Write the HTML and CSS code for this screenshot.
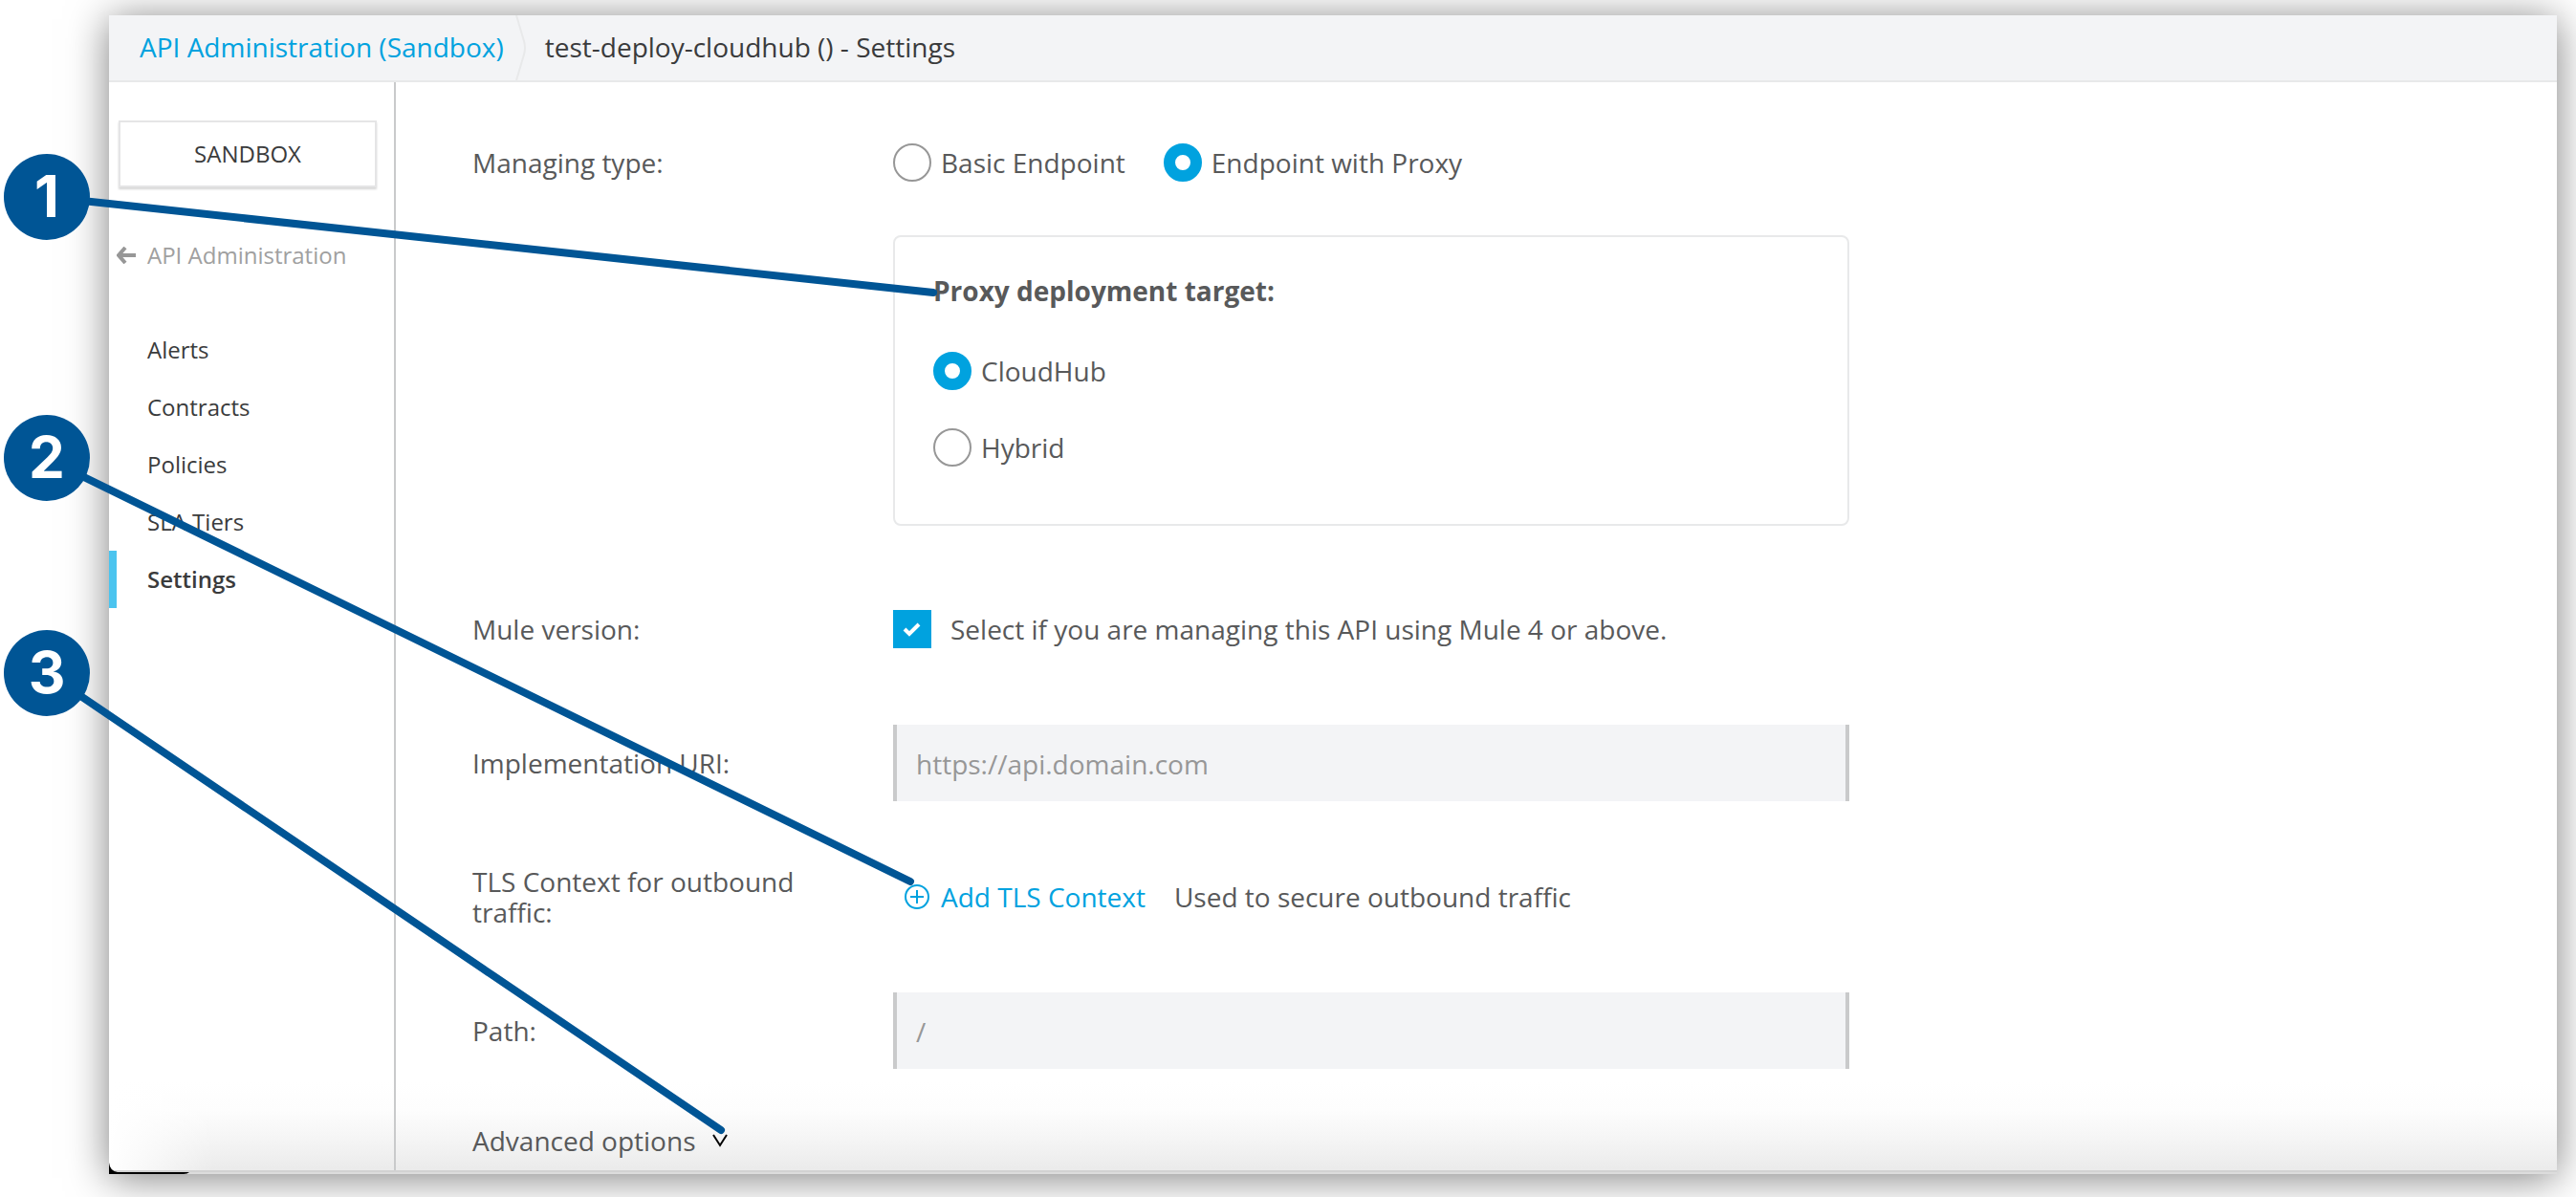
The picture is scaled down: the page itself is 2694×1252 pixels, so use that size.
FILE: index.html
```html
<!DOCTYPE html>
<html lang="en">
<head>
<meta charset="utf-8">
<title>test-deploy-cloudhub () - Settings</title>
<link rel="stylesheet" href="styles.css">
</head>
<body>
<div class="window">
  <header class="topbar">
    <a class="crumb-link" href="#">API Administration (Sandbox)</a>
    <svg class="crumb-sep" viewBox="0 0 12 68" preserveAspectRatio="none" aria-hidden="true"><path d="M1 0L9 27Q11 34 9 41L1 68"/></svg>
    <h1 class="crumb-current">test-deploy-cloudhub () - Settings</h1>
  </header>
  <div class="body">
    <aside class="sidebar">
      <button class="env-button" type="button">SANDBOX</button>
      <a class="back" href="#">
        <svg class="back-icon" viewBox="0 0 20 18" aria-hidden="true"><path d="M9 1L2 9L9 17M2 9H20"/></svg>
        API Administration
      </a>
      <nav class="nav">
        <a class="nav-item" href="#">Alerts</a>
        <a class="nav-item" href="#">Contracts</a>
        <a class="nav-item" href="#">Policies</a>
        <a class="nav-item" href="#">SLA Tiers</a>
        <a class="nav-item nav-item-active" href="#" aria-current="page">Settings</a>
      </nav>
    </aside>
    <main class="content">
      <form class="form">
        <div class="row" role="radiogroup" aria-labelledby="managing">
          <span class="row-label" id="managing">Managing type:</span>
          <div class="options">
            <label class="option"><input class="radio" type="radio" name="managing">Basic Endpoint</label>
            <label class="option"><input class="radio" type="radio" name="managing" checked>Endpoint with Proxy</label>
          </div>
        </div>
        <fieldset class="target" aria-labelledby="target">
          <span class="target-title" id="target">Proxy deployment target:</span>
          <label class="option"><input class="radio" type="radio" name="target" checked>CloudHub</label>
          <label class="option"><input class="radio" type="radio" name="target">Hybrid</label>
        </fieldset>
        <div class="row row-version">
          <span class="row-label">Mule version:</span>
          <label class="check-option">
            <span class="check-box">
              <input class="check" type="checkbox" checked>
              <svg class="check-mark" viewBox="0 0 20 16" aria-hidden="true"><path d="M2 8L7 13L17 3"/></svg>
            </span>
            Select if you are managing this API using Mule 4 or above.
          </label>
        </div>
        <div class="row row-uri">
          <label class="row-label" for="uri">Implementation URI:</label>
          <input class="field" id="uri" type="text" placeholder="https://api.domain.com">
        </div>
        <div class="row row-wide">
          <span class="row-label">TLS Context for outbound traffic:</span>
          <div class="tls">
            <button class="add" type="button">
              <svg class="add-icon" viewBox="0 0 26 26" aria-hidden="true"><circle cx="13" cy="13" r="12"/><path d="M13 6V20M6 13H20"/></svg>
              Add TLS Context
            </button>
            <span>Used to secure outbound traffic</span>
          </div>
        </div>
        <div class="row row-wide">
          <label class="row-label" for="path">Path:</label>
          <input class="field" id="path" type="text" placeholder="/">
        </div>
        <button class="advanced" type="button">
          Advanced options
          <svg class="advanced-icon" viewBox="0 0 16 14" aria-hidden="true"><path d="M1 1L8 12L15 1"/></svg>
        </button>
      </form>
    </main>
  </div>
  <svg class="corner" viewBox="0 0 84 12" aria-hidden="true"><path d="M0 0Q1 9 9 10H84Q82 12 78 12H0Z"/></svg>
</div>
<svg class="callouts">
  <g class="callout-lines">
    <path d="M49 206L976 306"/>
    <path d="M49 480L952 922"/>
    <path d="M49 704L754 1182"/>
  </g>
  <circle cx="49" cy="206" r="45"/>
  <circle cx="49" cy="479" r="45"/>
  <circle cx="49" cy="704" r="45"/>
  <g class="callout-numbers">
    <text x="49" y="227">1</text>
    <text x="49" y="500">2</text>
    <text x="49" y="725">3</text>
  </g>
</svg>
</body>
</html>
```
FILE: styles.css
```css
* { box-sizing: border-box; }

body {
  margin: 0;
  min-height: 100vh;
  display: flex;
  position: relative;
  padding: 16px 20px 24px 114px;
  background: #fff;
  color: #58595a;
  font: 28px/32px "Open Sans", "Noto Sans", sans-serif;
  overflow: hidden;
}

a { text-decoration: none; }

button, input { font: inherit; }

button {
  border: 0;
  padding: 0;
  background: none;
  cursor: pointer;
}

.window {
  flex: 1;
  min-width: 0;
  display: flex;
  flex-direction: column;
  position: relative;
  border-bottom: 2px solid #dcdcdc;
  background:
    linear-gradient(to right, #fff, rgba(255, 255, 255, 0) 110px),
    linear-gradient(to top, #eaeaea, #f5f5f5 35px, #fdfdfd 65px, #fff 95px) #fff;
  box-shadow: 0 4px 40px rgba(0, 0, 0, .5);
}

.topbar {
  display: flex;
  align-items: center;
  height: 70px;
  padding-left: 32px;
  border-bottom: 2px solid #e8e9ea;
  background: #f3f4f6;
}

.crumb-link,
.crumb-current { padding-bottom: 2px; }

.crumb-link { color: #00a2df; }

.crumb-sep {
  width: 12px;
  height: 68px;
  margin: 0 19px 0 12px;
  fill: none;
  stroke: #e8e9ea;
  stroke-width: 2;
}

.crumb-current {
  margin: 0;
  color: #3a3b3c;
  font-size: 28px;
  font-weight: 400;
}

.body {
  flex: 1;
  display: flex;
  border-bottom: 2px solid #d2d2d2;
}

.sidebar {
  width: 300px;
  flex: none;
  padding-top: 40px;
  border-right: 2px solid #c9cacb;
  color: #3a3b3c;
  font-size: 24px;
}

.env-button {
  display: block;
  width: 270px;
  height: 70px;
  margin-left: 10px;
  border: 2px solid #e5e5e6;
  background: #fff;
  box-shadow: 0 2px 2px rgba(0, 0, 0, .16);
  color: #3a3b3c;
}

.back {
  display: flex;
  align-items: center;
  gap: 12px;
  margin-top: 55px;
  padding-left: 8px;
  color: #a0a0a0;
}

.back-icon {
  width: 20px;
  height: 18px;
  fill: none;
  stroke: #979797;
  stroke-width: 4;
}

.nav { margin-top: 53px; }

.nav-item {
  display: block;
  padding: 14px 0 14px 32px;
  border-left: 8px solid transparent;
  color: #3a3b3c;
}

.nav-item-active {
  border-color: #4bc4ef;
  font-weight: 600;
}

.content {
  flex: 1;
  min-width: 0;
  padding: 64px 80px 10px;
}

.form { max-width: 1440px; }

.row {
  display: grid;
  grid-template-columns: 400px minmax(0, 1fr);
  column-gap: 40px;
  align-items: center;
  min-height: 40px;
}

.row-version { margin-top: 88px; }
.row-uri { margin-top: 80px; }

.row-wide {
  min-height: 80px;
  margin-top: 60px;
}

.options {
  display: flex;
  gap: 40px;
}

.option {
  display: flex;
  align-items: center;
  gap: 10px;
}

.radio {
  appearance: none;
  flex: none;
  width: 40px;
  height: 40px;
  margin: 0;
  border: 2px solid #979797;
  border-radius: 50%;
  background: #fff;
}

.radio:checked { border: 12px solid #00a2df; }

.target {
  display: flex;
  flex-direction: column;
  gap: 40px;
  margin: 56px 0 0 440px;
  padding: 40px 40px 60px;
  border: 2px solid #e8e9ea;
  border-radius: 8px;
}

.target-title {
  padding-bottom: 8px;
  font-weight: 700;
}

.check-option {
  display: flex;
  align-items: center;
  gap: 20px;
}

.check-box {
  display: grid;
  flex: none;
  place-items: center;
}

.check, .check-mark { grid-area: 1 / 1; }

.check {
  appearance: none;
  width: 40px;
  height: 40px;
  margin: 0;
  border: 2px solid #979797;
}

.check:checked {
  border-color: #00a2df;
  background: #00a2df;
}

.check-mark {
  width: 20px;
  height: 16px;
  fill: none;
  stroke: #fff;
  stroke-width: 4;
  pointer-events: none;
}

.field {
  width: 100%;
  height: 80px;
  padding: 2px 20px 0;
  border: solid #c9cacb;
  border-width: 0 4px;
  border-radius: 0;
  background: #f3f4f6;
  color: #58595a;
}

.field::placeholder {
  color: #979797;
  opacity: 1;
}

.tls {
  display: flex;
  align-items: center;
  gap: 30px;
  padding-left: 12px;
}

.add {
  display: flex;
  align-items: center;
  gap: 12px;
  color: #00a2df;
}

.add-icon {
  width: 26px;
  height: 26px;
  fill: none;
  stroke: #00a2df;
  stroke-width: 2;
}

.advanced {
  display: flex;
  align-items: center;
  gap: 18px;
  height: 40px;
  margin-top: 55px;
  color: #58595a;
}

.advanced-icon {
  width: 16px;
  height: 14px;
  fill: none;
  stroke: #000;
  stroke-width: 2;
}

.corner {
  position: absolute;
  left: 0;
  bottom: -2px;
  width: 84px;
  height: 12px;
}

.callouts {
  position: absolute;
  top: 0;
  left: 0;
  width: 100%;
  height: 100%;
  fill: #005595;
  pointer-events: none;
}

.callout-lines {
  fill: none;
  stroke: #005595;
  stroke-width: 8;
  stroke-linecap: round;
}

.callout-numbers {
  fill: #fff;
  font: bold 60px Inter, "Liberation Sans", sans-serif;
  text-anchor: middle;
}
```
